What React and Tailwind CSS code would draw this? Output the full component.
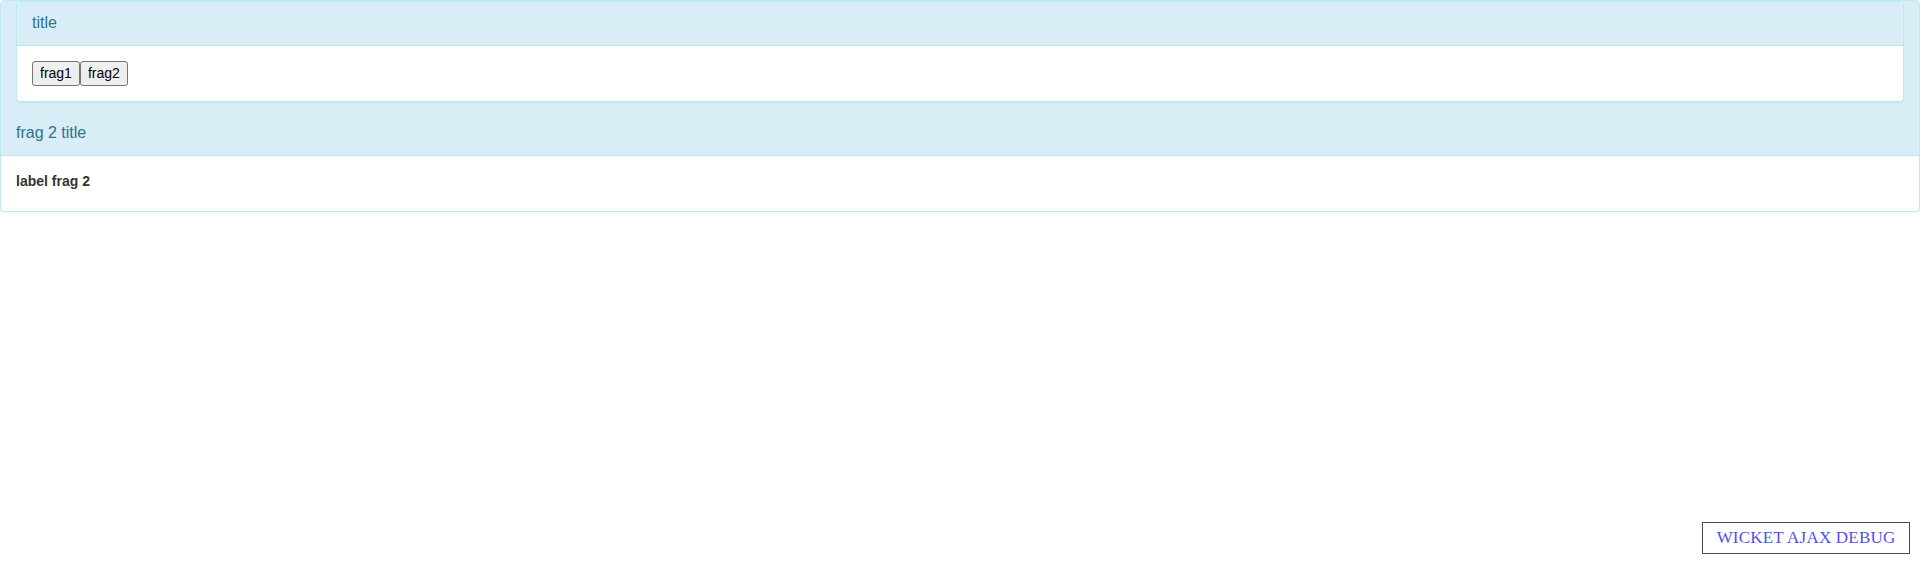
import React from "react";

export default function App() {
  return (
    <div className="text-[14px] leading-[1.42857] text-[#333] bg-white" style={{ fontFamily: '"Liberation Sans", Arial, sans-serif' }}>
      <div className="mb-[20px] bg-white border border-[#bce8f1] rounded-[4px] shadow-[0_1px_1px_rgba(0,0,0,0.05)]">
        <div className="bg-[#d9edf7] text-[#31708f] border-b border-[#bce8f1] rounded-t-[3px] px-[15px] pb-[10px]">
          <div className="mb-[20px] bg-white border border-[#bce8f1] rounded-[4px] shadow-[0_1px_1px_rgba(0,0,0,0.05)]">
            <div className="bg-[#d9edf7] text-[#31708f] border-b border-[#bce8f1] rounded-t-[3px] px-[15px] py-[10px] text-[16px] leading-[22.86px]">
              title
            </div>
            <div className="p-[15px] flex">
              <button className="h-[25px] px-[7px] leading-[20px] text-[14px] text-black bg-[#efefef] border border-[#767676] rounded-[3px]">frag1</button>
              <button className="h-[25px] px-[7px] leading-[20px] text-[14px] text-black bg-[#efefef] border border-[#767676] rounded-[3px]">frag2</button>
            </div>
          </div>
          <div className="text-[16px] leading-[22.86px]">frag 2 title</div>
        </div>
        <div className="p-[15px]">
          <div className="font-bold mb-[5px] leading-[20px]">label frag 2</div>
        </div>
      </div>
      <div className="fixed bottom-[10px] right-[10px] opacity-70 bg-white border border-black w-[208px] h-[32px] flex items-center justify-center" style={{ fontFamily: '"Liberation Serif", "Times New Roman", serif' }}>
        <span className="text-[17px] leading-[18px] tracking-[0.2px] text-[#0000ee]">WICKET AJAX DEBUG</span>
      </div>
    </div>
  );
}
